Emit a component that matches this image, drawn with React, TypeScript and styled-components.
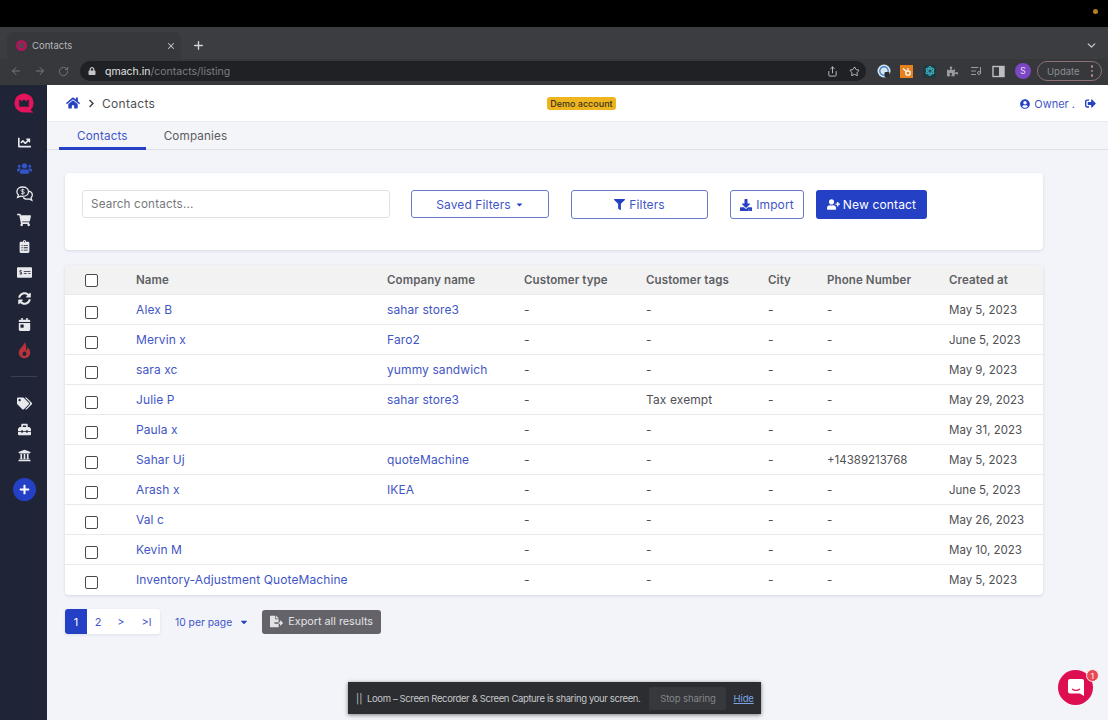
import React from "react";
import styled, { createGlobalStyle } from "styled-components";
import {
  FaHome, FaChartLine, FaUsers, FaShoppingCart, FaClipboardList,
  FaMoneyCheckAlt, FaSyncAlt, FaCalendarDay, FaTags, FaToolbox, FaUniversity, FaPlus,
  FaFilter, FaDownload, FaUserPlus, FaFileExport, FaUserCircle, FaSignOutAlt, FaCaretDown,
  FaChevronRight, FaLock, FaPuzzlePiece, FaAtom,
} from "react-icons/fa";
import { ArrowLeft, ArrowRight, RotateCw, Share, Star, ListMusic, ChevronDown, X, Plus } from "lucide-react";

const BLUE = "#2440c4";
const LINK = "#3f56c6";
const TEXT = "#555659";

const Global = createGlobalStyle`
  html, body { margin: 0; padding: 0; height: 720px; overflow: hidden; background: #000; }
  * { box-sizing: border-box; }
  body { font-family: Inter, "Open Sans", "Liberation Sans", sans-serif; }
`;

const Page = styled.div`
  width: 1108px; height: 720px; display: flex; flex-direction: column; position: relative; overflow: hidden;
`;
const TopBlack = styled.div`
  height: 27px; background: #000; display: flex; justify-content: flex-end; padding: 9px 10px 0 0;
`;
const Dot = styled.span`
  width: 5px; height: 5px; border-radius: 50%; background: #b9801e;
`;
const TabStrip = styled.div`
  height: 32px; background: #3b3d41; display: flex; align-items: flex-end; padding-left: 7px; position: relative;
`;
const BrowserTab = styled.div`
  width: 174px; height: 27px; background: #36383c; border-radius: 7px 7px 0 0; display: flex; align-items: center;
  padding: 0 5px 0 9px; color: #b6b7b9; font-size: 9.5px;
`;
const Favicon = styled.span`
  width: 11px; height: 11px; border-radius: 50%; background: #b0155c; margin-right: 5px; flex: none;
  display: flex; align-items: center; justify-content: center;
  &::after { content: ""; width: 5px; height: 5px; background: #5a4250; border-radius: 1px; }
`;
const TabTitle = styled.span` flex: 1; `;
const NewTab = styled.span`
  width: 26px; height: 27px; margin-left: 4px; display: flex; align-items: center; justify-content: center; color: #d4d5d7;
`;
const StripEnd = styled.span`
  margin-left: auto; margin-right: 10px; height: 27px; display: flex; align-items: center; color: #c5c6c8;
`;
const Toolbar = styled.div`
  height: 26px; background: #36383c; display: flex; align-items: center; padding: 0 0 2px 10px; color: #77797c;
`;
const NavIcon = styled.span`
  width: 24px; display: flex; align-items: center; color: #77797c;
`;
const Omnibox = styled.div`
  width: 786px; height: 20px; margin-left: -2px; background: #1f2125; border-radius: 10px; display: flex; align-items: center;
  padding: 0 6px 0 8px; font-size: 10.5px; color: #7d7f82; gap: 9px;
`;
const Host = styled.span` color: #e2e3e4; `;
const Url = styled.span` flex: 1; `;
const OmniIcon = styled.span` display: flex; color: #c4c5c7; margin-left: 2px; `;
const Extensions = styled.div`
  display: flex; align-items: center; margin-left: 6px; flex: 1;
`;
const Ext = styled.span<{ $c?: string }>`
  width: 23px; height: 14px; display: flex; align-items: center; justify-content: center; color: ${(p) => p.$c || "#9a9b9e"};
`;
const AtomBox = styled.span`
  width: 13px; height: 13px; background: #1e3a40; border-radius: 2px; display: flex; align-items: center; justify-content: center; color: #3ba7b5;
`;
const Avatar = styled.span`
  width: 16px; height: 16px; border-radius: 50%; background: #7b47c4; color: #e8def6; font-size: 8.5px;
  display: flex; align-items: center; justify-content: center; margin-left: 5px;
`;
const UpdatePill = styled.div`
  margin-left: 6px; width: 65px; height: 20px; border: 1px solid #8d6f74; border-radius: 10px; color: #8d8e91; font-size: 9.5px;
  display: flex; align-items: center; justify-content: space-between; padding: 0 8px 0 9px;
`;
const Kebab = styled.span`
  display: flex; flex-direction: column; gap: 2px;
  i { width: 2.5px; height: 2.5px; border-radius: 50%; background: #b97f8a; display: block; }
`;
const Body = styled.div`
  flex: 1; display: flex; min-height: 0; background: #f2f4fa;
`;
const Sidebar = styled.nav`
  width: 47px; background: #1f2537; display: flex; flex-direction: column; align-items: center; padding: 8px 0 0 1px; color: #e8e9ec;
`;
const Logo = styled.div` height: 20px; margin-bottom: 16px; display: flex; `;
const SideIcon = styled.div<{ $active?: boolean }>`
  height: 26px; display: flex; align-items: center; justify-content: center; color: ${(p) => (p.$active ? "#3554c9" : "#e8e9ec")};
`;
const SideRule = styled.div`
  width: 26px; height: 1px; background: #3a4052; margin: 13px 0 13px;
`;
const AddBtn = styled.div`
  width: 23px; height: 23px; border-radius: 50%; background: ${BLUE}; color: #fff; margin-top: 10px;
  display: flex; align-items: center; justify-content: center;
`;
const Main = styled.main` flex: 1; display: flex; flex-direction: column; min-width: 0; `;
const Header = styled.header`
  height: 37px; background: #fff; display: flex; align-items: center; padding: 0 12px 0 19px; position: relative; color: ${TEXT};
  border-bottom: 1px solid #ebecef;
`;
const Crumb = styled.span`
  color: #4f5054; font-size: 12px; letter-spacing: 0.3px; margin-left: 6px;
`;
const Chevron = styled.span` display: flex; margin-left: 7px; color: #3c3d40; `;
const DemoBadge = styled.span`
  background: #eeb51f; color: #3b3420; font-size: 9px; font-weight: 500; border-radius: 3px; padding: 2px 3px; line-height: 9px;
  margin-left: 392px; white-space: nowrap;
`;
const Owner = styled.div`
  margin-left: auto; display: flex; align-items: center; gap: 4px; color: ${LINK}; font-size: 11px; padding-top: 1px;
`;
const Logout = styled.span` display: flex; margin-left: 6px; color: ${BLUE}; `;
const Tabs = styled.div`
  height: 28px; background: #f4f5f8; border-bottom: 1px solid #dfe0e5; display: flex; padding-left: 12px;
`;
const TabItem = styled.div<{ $active?: boolean }>`
  height: 28px; padding: 2px 18px 0; display: flex; align-items: center; font-size: 11.7px; letter-spacing: 0.15px;
  color: ${(p) => (p.$active ? "#3f56c6" : "#5a5b5f")};
  border-bottom: 3px solid ${(p) => (p.$active ? BLUE : "transparent")};
`;
const Content = styled.div`
  flex: 1; padding: 23px 65px 0 18px; display: flex; flex-direction: column;
`;
const FilterCard = styled.section`
  height: 77px; background: #fff; border-radius: 4px; box-shadow: 0 1px 3px rgba(40,50,90,.14);
  padding: 17px; display: flex; align-items: flex-start;
`;
const Search = styled.div`
  width: 308px; height: 28px; border: 1px solid #e0e1e5; border-radius: 3px; background: #fff; color: #77787c;
  font-size: 11.7px; letter-spacing: 0.15px; display: flex; align-items: center; padding: 0 0 1px 8px;
`;
const OutlineBtn = styled.div<{ $w: number; $ml: number; $h?: number }>`
  width: ${(p) => p.$w}px; height: ${(p) => p.$h || 29}px; margin-left: ${(p) => p.$ml}px; border: 1px solid #6a7cc8; border-radius: 3px;
  color: ${LINK}; font-size: 12px; letter-spacing: 0.1px; display: flex; align-items: center; justify-content: center; gap: 4px; background: #fff;
  svg { color: ${BLUE}; }
`;
const PrimaryBtn = styled.div`
  width: 111px; height: 29px; margin-left: 12px; background: ${BLUE}; border-radius: 3px; color: #fff; font-size: 12px; letter-spacing: 0.15px;
  display: flex; align-items: center; justify-content: center; gap: 3px;
`;
const Table = styled.section`
  margin-top: 15px; background: #fff; border-radius: 4px; box-shadow: 0 1px 3px rgba(40,50,90,.14); overflow: hidden; padding-bottom: 1px;
`;
const COLS = "71px 251px 137px 122px 122px 59px 122px 1fr";
const HeadRow = styled.div`
  height: 29px; padding-top: 1px; background: #f2f2f3; display: grid; grid-template-columns: ${COLS}; align-items: center;
  color: #5e5f63; font-size: 11.5px; font-weight: 600; letter-spacing: 0.1px;
`;
const Row = styled.div`
  height: 30px; display: grid; grid-template-columns: ${COLS}; align-items: center; border-top: 1px solid #e9e9ec;
  color: #4f5054; font-size: 12px; letter-spacing: 0.1px;
`;
const Check = styled.span<{ $off?: number }>`
  width: 13px; height: 13px; border: 1.5px solid #4a4a4d; border-radius: 2px; background: #fff; margin-left: 20px;
  margin-top: ${(p) => p.$off || 0}px;
`;
const Link = styled.span` color: ${LINK}; white-space: nowrap; `;
const Cell = styled.span` white-space: nowrap; `;
const Digits = styled.span` white-space: nowrap; font-size: 11.5px; letter-spacing: 0; `;
const Footer = styled.div`
  margin-top: 14px; display: flex; align-items: center;
`;
const Pager = styled.div`
  display: flex; background: #fff; border-radius: 3px; box-shadow: 0 1px 3px rgba(40,50,90,.1); height: 25px;
`;
const PageBtn = styled.span<{ $active?: boolean; $w: number }>`
  width: ${(p) => p.$w}px; display: flex; align-items: center; justify-content: center; font-size: 11px;
  border-radius: ${(p) => (p.$active ? "3px 0 0 3px" : "0")};
  background: ${(p) => (p.$active ? BLUE : "transparent")}; color: ${(p) => (p.$active ? "#fff" : LINK)};
`;
const PerPage = styled.div`
  margin-left: 15px; display: flex; align-items: center; gap: 7px; color: ${LINK}; font-size: 10.3px;
  svg { color: ${BLUE}; }
`;
const ExportBtn = styled.div`
  margin-left: 13px; width: 119px; height: 24px; background: #636369; border-radius: 3px; color: #e3e3e5; font-size: 10.8px;
  display: flex; align-items: center; justify-content: center; gap: 5px;
`;
const LoomBar = styled.div`
  position: absolute; left: 348px; top: 682px; width: 413px; height: 32px; background: #2b2d31; box-shadow: 0 1px 4px rgba(0,0,0,.5);
  display: flex; align-items: center; padding-left: 8px; color: #c6c7c9; font-size: 9.5px; letter-spacing: -0.37px; white-space: nowrap;
`;
const Pause = styled.span` color: #c6c7c9; width: 11px; flex: none; letter-spacing: 0; `;
const StopBtn = styled.span`
  margin-left: 9px; margin-right: 7px; height: 23px; width: 77px; flex: none; background: #36383c; border-radius: 2px; color: #85868a;
  display: flex; align-items: center; justify-content: center; letter-spacing: -0.1px;
`;
const HideLink = styled.span` color: #7da2e6; text-decoration: underline; letter-spacing: -0.1px; `;
const Launcher = styled.div`
  position: absolute; left: 1058px; top: 670px; width: 35px; height: 35px; border-radius: 50%; background: #dd0f50;
  display: flex; align-items: center; justify-content: center;
`;
const LauncherBadge = styled.span`
  position: absolute; right: -6px; top: -1px; width: 13px; height: 13px; border-radius: 50%; background: #e84a55; border: 1px solid #fff0f0;
  color: #fff; font-size: 8px; display: flex; align-items: center; justify-content: center;
`;

const rows = [
  ["Alex B", "sahar store3", "-", "-", "-", "-", "May 5, 2023"],
  ["Mervin x", "Faro2", "-", "-", "-", "-", "June 5, 2023"],
  ["sara xc", "yummy sandwich", "-", "-", "-", "-", "May 9, 2023"],
  ["Julie P", "sahar store3", "-", "Tax exempt", "-", "-", "May 29, 2023"],
  ["Paula x", "", "-", "-", "-", "-", "May 31, 2023"],
  ["Sahar Uj", "quoteMachine", "-", "-", "-", "+14389213768", "May 5, 2023"],
  ["Arash x", "IKEA", "-", "-", "-", "-", "June 5, 2023"],
  ["Val c", "", "-", "-", "-", "-", "May 26, 2023"],
  ["Kevin M", "", "-", "-", "-", "-", "May 10, 2023"],
  ["Inventory-Adjustment QuoteMachine", "", "-", "-", "-", "-", "May 5, 2023"],
];

const LogoMark = () => (
  <svg width="20" height="20" viewBox="0 0 20 20">
    <circle cx="10" cy="10" r="9.6" fill="#e5125c" />
    <path d="M15 16l4.500 3.600H12z" fill="#e5125c" />
    <path d="M5.200 6.200l2.600 2 2.200-1.600 2.200 1.600 2.600-2v7.600H5.200z" fill="#1f2537" />
  </svg>
);
const Flame = () => (
  <svg width="13" height="18" viewBox="0 0 13 18">
    <path d="M6.800.5C7.500 3.500 1.200 7 .8 11c-.3 3.500 2.500 6.300 5.700 6.300 3.300 0 6-2.800 5.700-6.200-.2-2-1.500-3.500-2.900-5 .3 1.900-.4 3-1.400 3.900C8.500 7 8.300 3.300 6.800.5z" fill="#b8333d" />
    <path d="M6.400 10.200c-1.300 1-2 1.900-1.900 3 .1 1 1 1.700 2 1.700 1.100 0 2-.8 2-1.900 0-1-.9-1.900-2.100-2.800z" fill="#1f2537" />
  </svg>
);
const ChatDollar = () => (
  <svg width="17" height="16" viewBox="0 0 17 16" fill="none">
    <path d="M12.500 5.200c2.200.4 3.800 1.900 3.800 3.900 0 1.100-.5 2-1.300 2.700l.8 2.400-2.900-1.300c-2.100.6-4.400.1-5.800-1.400" stroke="#e8e9ec" strokeWidth="1.300" />
    <path d="M6.700 1C3.500 1 .9 3 .9 5.700c0 1.300.6 2.400 1.500 3.200l-.8 2.500 3-1.300c.7.200 1.400.3 2.100.3 3.200 0 5.800-2 5.800-4.700S9.900 1 6.700 1z" fill="#1f2537" stroke="#e8e9ec" strokeWidth="1.300" />
    <path d="M8.400 4.200C8 3.700 7.400 3.500 6.700 3.500c-.9 0-1.600.4-1.600 1.100 0 1.500 3.300.7 3.300 2.200 0 .7-.7 1.100-1.700 1.100-.7 0-1.300-.3-1.700-.7M6.700 2.700v6" stroke="#e8e9ec" strokeWidth=".9" />
  </svg>
);
const RingExt = () => (
  <svg width="14" height="14" viewBox="0 0 14 14">
    <circle cx="7" cy="7" r="6.500" fill="#d9e4ee" />
    <circle cx="7" cy="7" r="4.200" fill="none" stroke="#3f86c9" strokeWidth="1.400" />
    <rect x="7.500" y="8" width="5" height="5" rx="1" fill="#2b2d31" />
  </svg>
);
const HubExt = () => (
  <svg width="13" height="13" viewBox="0 0 13 13">
    <rect width="13" height="13" fill="#e8801f" />
    <circle cx="8" cy="8" r="2.200" fill="none" stroke="#fff" strokeWidth="1.300" />
    <path d="M8 5.800V3M6.500 6.500 3 3.500" stroke="#fff" strokeWidth="1.100" />
  </svg>
);
const PanelExt = () => (
  <svg width="13" height="13" viewBox="0 0 13 13">
    <rect x="1" y="1.500" width="11" height="10" fill="none" stroke="#bdbec0" strokeWidth="1.400" />
    <rect x="7" y="1.500" width="5" height="10" fill="#bdbec0" />
  </svg>
);

export default function App() {
  return (
    <Page>
      <Global />
      <TopBlack><Dot /></TopBlack>
      <TabStrip>
        <BrowserTab>
          <Favicon />
          <TabTitle>Contacts</TabTitle>
          <X size={10} color="#c5c6c8" strokeWidth={2.5} />
        </BrowserTab>
        <NewTab><Plus size={13} strokeWidth={2.5} /></NewTab>
        <StripEnd><ChevronDown size={13} strokeWidth={2.5} /></StripEnd>
      </TabStrip>
      <Toolbar>
        <NavIcon><ArrowLeft size={12} /></NavIcon>
        <NavIcon><ArrowRight size={12} /></NavIcon>
        <NavIcon><RotateCw size={11} /></NavIcon>
        <Omnibox>
          <FaLock size={8} color="#c4c5c7" />
          <Url><Host>qmach.in</Host>/contacts/listing</Url>
          <OmniIcon><Share size={11} /></OmniIcon>
          <OmniIcon><Star size={11} /></OmniIcon>
        </Omnibox>
        <Extensions>
          <Ext><RingExt /></Ext>
          <Ext><HubExt /></Ext>
          <Ext><AtomBox><FaAtom size={10} /></AtomBox></Ext>
          <Ext><FaPuzzlePiece size={11} /></Ext>
          <Ext><ListMusic size={12} /></Ext>
          <Ext><PanelExt /></Ext>
          <Avatar>S</Avatar>
          <UpdatePill>Update<Kebab><i /><i /><i /></Kebab></UpdatePill>
        </Extensions>
      </Toolbar>
      <Body>
        <Sidebar>
          <Logo><LogoMark /></Logo>
          <SideIcon><FaChartLine size={13} /></SideIcon>
          <SideIcon $active><FaUsers size={15} /></SideIcon>
          <SideIcon><ChatDollar /></SideIcon>
          <SideIcon><FaShoppingCart size={14} /></SideIcon>
          <SideIcon><FaClipboardList size={13} /></SideIcon>
          <SideIcon><FaMoneyCheckAlt size={15} /></SideIcon>
          <SideIcon><FaSyncAlt size={13} /></SideIcon>
          <SideIcon><FaCalendarDay size={13} /></SideIcon>
          <SideIcon><Flame /></SideIcon>
          <SideRule />
          <SideIcon><FaTags size={15} /></SideIcon>
          <SideIcon><FaToolbox size={13} /></SideIcon>
          <SideIcon><FaUniversity size={13} /></SideIcon>
          <AddBtn><FaPlus size={11} /></AddBtn>
        </Sidebar>
        <Main>
          <Header>
            <FaHome size={14} color={BLUE} />
            <Chevron><FaChevronRight size={9} /></Chevron>
            <Crumb>Contacts</Crumb>
            <DemoBadge>Demo account</DemoBadge>
            <Owner><FaUserCircle size={10} color={BLUE} />Owner .<Logout><FaSignOutAlt size={11} /></Logout></Owner>
          </Header>
          <Tabs>
            <TabItem $active>Contacts</TabItem>
            <TabItem>Companies</TabItem>
          </Tabs>
          <Content>
            <FilterCard>
              <Search>Search contacts...</Search>
              <OutlineBtn $w={138} $ml={21} $h={28}>Saved Filters<FaCaretDown size={9} /></OutlineBtn>
              <OutlineBtn $w={137} $ml={22}><FaFilter size={11} />Filters</OutlineBtn>
              <OutlineBtn $w={74} $ml={22}><FaDownload size={12} />Import</OutlineBtn>
              <PrimaryBtn><FaUserPlus size={13} />New contact</PrimaryBtn>
            </FilterCard>
            <Table>
              <HeadRow>
                <Check />
                <span>Name</span><span>Company name</span><span>Customer type</span>
                <span>Customer tags</span><span>City</span><span>Phone Number</span><span>Created at</span>
              </HeadRow>
              {rows.map((r, i) => (
                <Row key={i}>
                  <Check $off={6} />
                  <Link>{r[0]}</Link>
                  <Link>{r[1]}</Link>
                  <Cell>{r[2]}</Cell><Cell>{r[3]}</Cell><Cell>{r[4]}</Cell><Digits>{r[5]}</Digits><Digits>{r[6]}</Digits>
                </Row>
              ))}
            </Table>
            <Footer>
              <Pager>
                <PageBtn $active $w={22}>1</PageBtn>
                <PageBtn $w={22}>2</PageBtn>
                <PageBtn $w={24}>&gt;</PageBtn>
                <PageBtn $w={27}>&gt;l</PageBtn>
              </Pager>
              <PerPage>10 per page<FaCaretDown size={10} /></PerPage>
              <ExportBtn><FaFileExport size={13} />Export all results</ExportBtn>
            </Footer>
          </Content>
        </Main>
      </Body>
      <LoomBar>
        <Pause>||</Pause>Loom – Screen Recorder &amp; Screen Capture is sharing your screen.
        <StopBtn>Stop sharing</StopBtn>
        <HideLink>Hide</HideLink>
      </LoomBar>
      <Launcher>
        <svg width="18" height="19" viewBox="0 0 18 19">
          <path d="M3 1h12a2 2 0 0 1 2 2v15l-4-2.500H3a2 2 0 0 1-2-2V3a2 2 0 0 1 2-2z" fill="#fff" />
          <path d="M5 11c2.500 1.800 5.500 1.800 8 0" stroke="#dd0f50" strokeWidth="1.200" fill="none" />
        </svg>
        <LauncherBadge>1</LauncherBadge>
      </Launcher>
    </Page>
  );
}
